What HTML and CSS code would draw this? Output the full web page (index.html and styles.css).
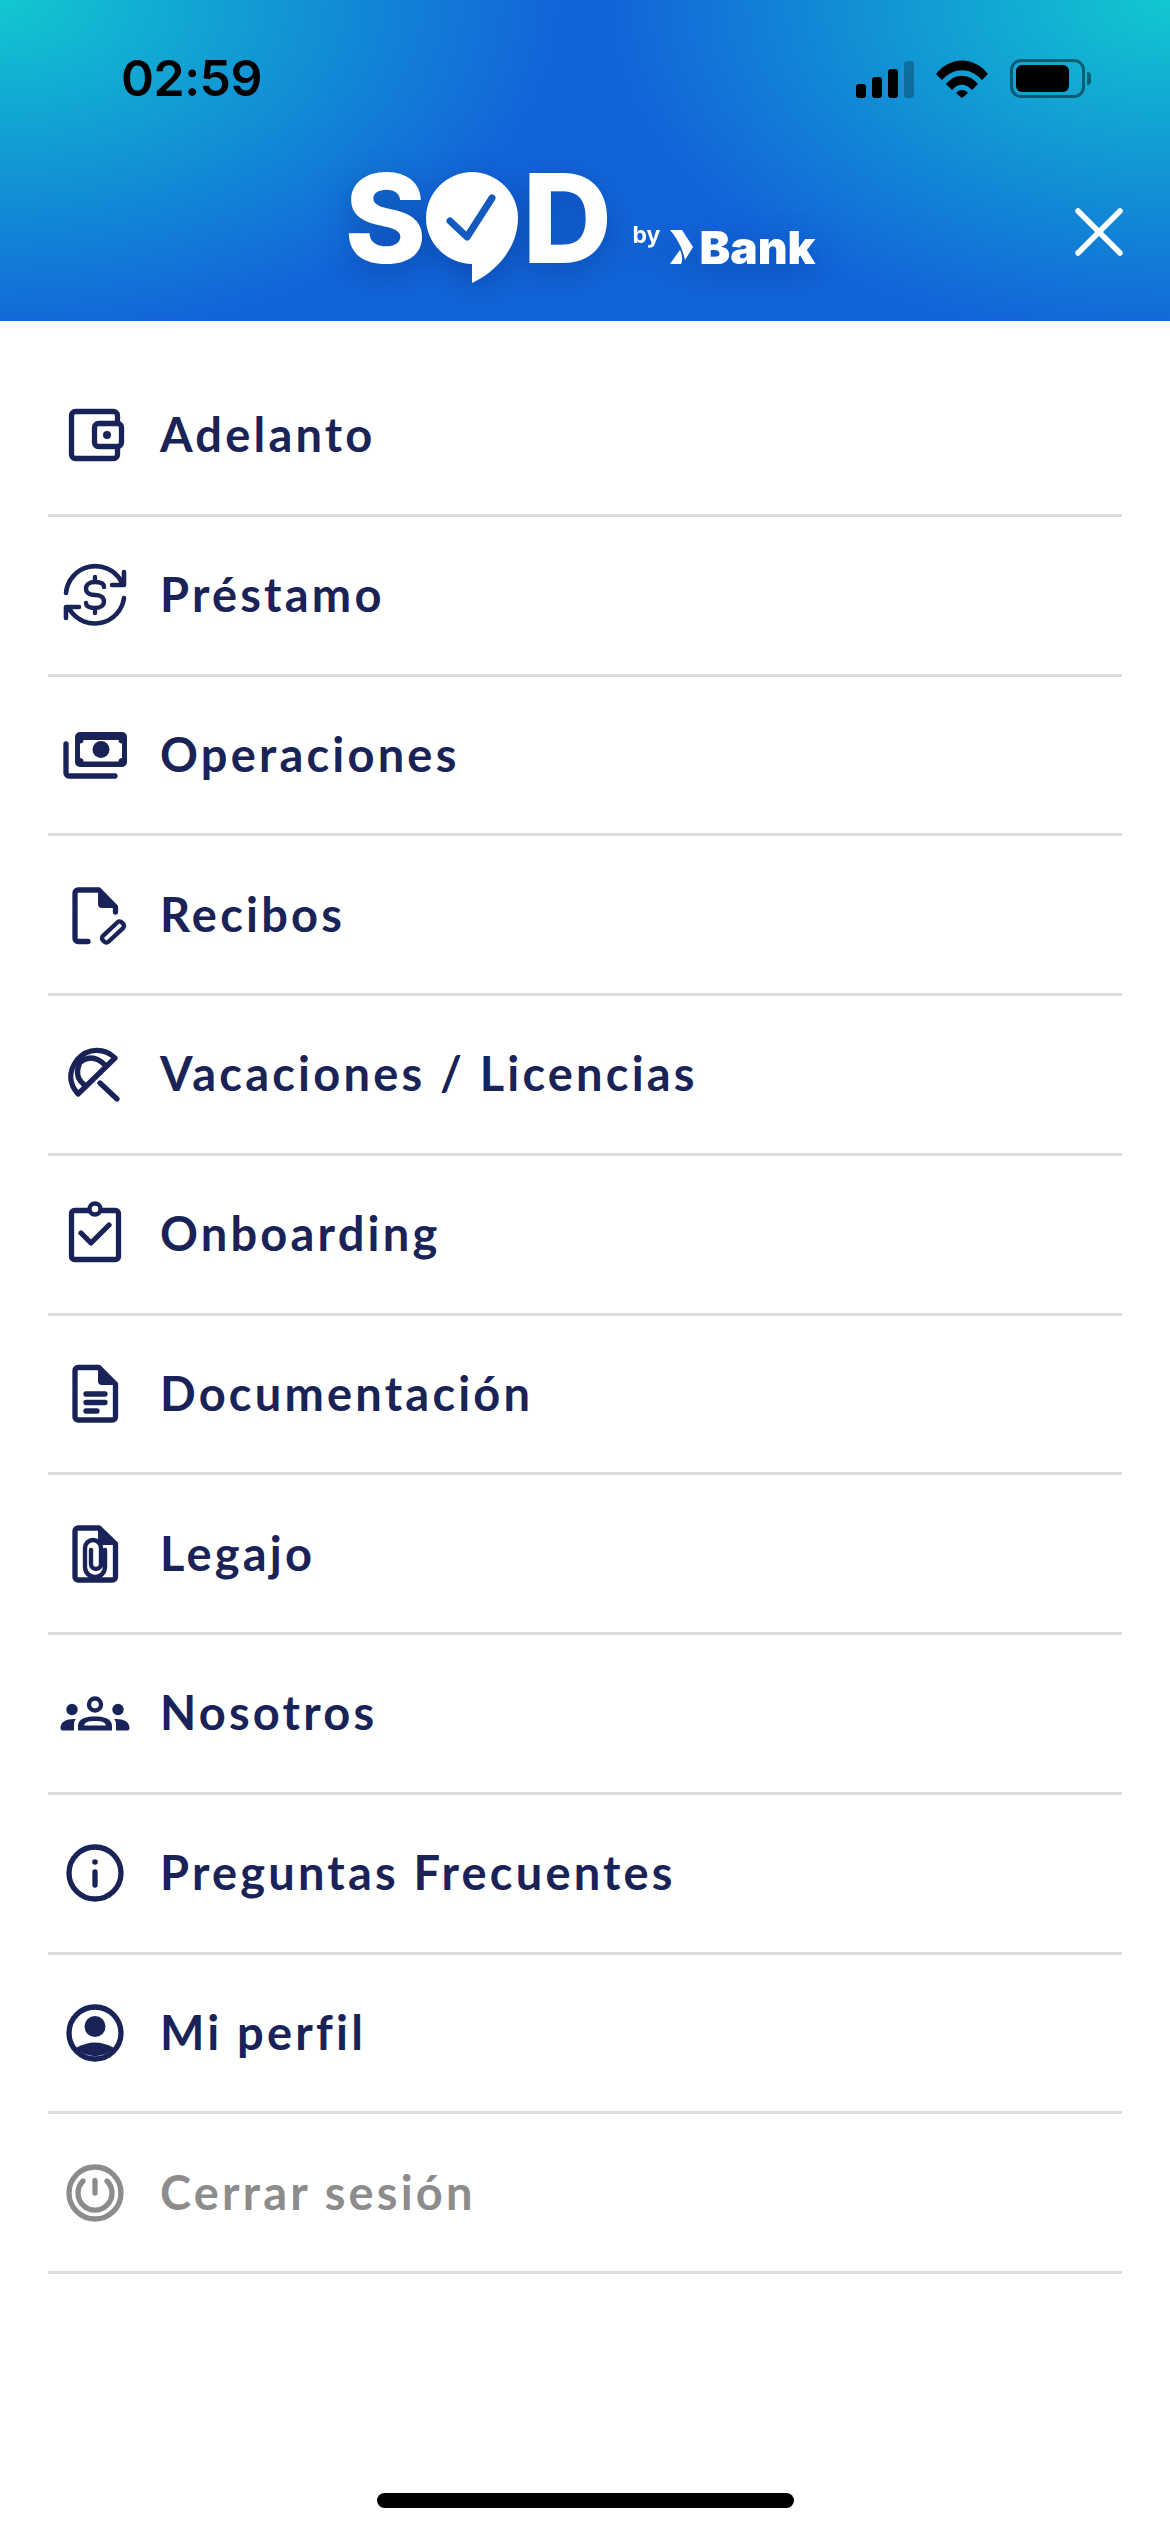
FILE: index.html
```html
<!DOCTYPE html>
<html lang="es">
<head>
<meta charset="utf-8">
<title>Menú</title>
<link rel="stylesheet" href="styles.css">
</head>
<body>
<div class="screen">
  <header class="header">
    <div class="status">
      <span class="time">02:59</span>
      <div class="status-icons">
        <div class="signal"><i class="b1"></i><i class="b2"></i><i class="b3"></i><i class="b4"></i></div>
        <svg class="wifi" width="52" height="38" viewBox="0 0 52 38"><path d="M0 14 C14 -4 38 -4 52 14 L46 20 C34 7 18 7 6 20Z"/><path d="M10 24 C19 13 33 13 42 24 L36 30 C30 23 22 23 16 30Z"/><path d="M20 33 C23 29 29 29 32 33 L26 38Z"/></svg>
        <div class="battery"><div class="battery-body"><div class="battery-fill"></div></div><div class="battery-cap"></div></div>
      </div>
    </div>
    <div class="brand-row">
      <div class="logo">
        <span class="logo-letter logo-s">S</span>
        <svg class="bubble" width="96" height="112" viewBox="0 0 96 112"><path class="bubble-shape" d="M48 0 A46.5 46 0 0 1 94 46 C94 76 72 100 48 111 V92 A46.5 46 0 0 1 2 46 A46.5 46 0 0 1 48 0Z"/><path class="bubble-check" d="M26 49 L43 65 L68 26"/></svg>
        <span class="logo-letter logo-d">D</span>
        <span class="logo-by">by</span>
        <svg class="chevron" width="24" height="36" viewBox="0 0 24 36"><path d="M1 1 H13 L24 18 L16 31 C14 22 11 13 1 1Z"/><path d="M8 25 L11 21 C13 25 14 31 12 35 H1Z"/></svg>
        <span class="logo-bank">Bank</span>
      </div>
      <svg class="close" width="48" height="48" viewBox="0 0 48 48"><path d="M3 3 L45 45 M45 3 L3 45"/></svg>
    </div>
  </header>

  <ul class="menu">
    <li class="item"><svg class="icon" viewBox="0 0 80 80"><rect x="16.5" y="16.5" width="46" height="47" rx="4"/><rect class="knock" x="39.5" y="28.5" width="27" height="23" rx="4"/><circle class="solid" cx="52" cy="40" r="4"/></svg><span>Adelanto</span></li>

    <li class="item"><svg class="icon" viewBox="0 0 80 80"><path class="mid" d="M11 38 A29.5 29.5 0 0 1 66 26 M69 17 V30 H57 M69 43 A29.5 29.5 0 0 1 15 55 M11 63 V52 H24"/><path class="thin" d="M49 32 C49 28 45 27 40 27 C34 27 31 30 31 33.5 C31 38 35 40 40 40 C45 40 49 42 49 46.5 C49 50 46 53 40 53 C35 53 31 52 31 48 M40 22 V27 M40 53 V58"/></svg><span>Préstamo</span></li>

    <li class="item"><svg class="icon" viewBox="0 0 80 80"><rect class="solid" x="20" y="17" width="52" height="35" rx="5"/><rect class="white" x="25" y="25" width="42" height="21.5"/><circle class="solid" cx="25" cy="25" r="3.5"/><circle class="solid" cx="67" cy="25" r="3.5"/><circle class="solid" cx="25" cy="46.5" r="3.5"/><circle class="solid" cx="67" cy="46.5" r="3.5"/><circle class="solid" cx="46" cy="34.5" r="8.5"/><path d="M11 29 V58 a3 3 0 0 0 3 3 H60"/></svg><span>Operaciones</span></li>

    <li class="item"><svg class="icon" viewBox="0 0 80 80"><path d="M33 66.5 H23 a3 3 0 0 1 -3 -3 V18 a3 3 0 0 1 3 -3 H44 L60.5 32 V37"/><path class="solid" d="M43 13 L63 33 H47 a4 4 0 0 1 -4 -4Z"/><rect class="thin" x="-13" y="-4" width="26" height="8" rx="3" transform="translate(58 57) rotate(-43)"/></svg><span>Recibos</span></li>

    <li class="item"><svg class="icon" viewBox="0 0 80 80"><path d="M60 24 L23 60 C14 50 13 38 22 26 C33 13 50 14 60 24Z"/><path d="M22 31 Q36 17 50 31 M24 31 Q19 44 31 52"/><path d="M45 49 L62 65"/></svg><span>Vacaciones / Licencias</span></li>

    <li class="item"><svg class="icon" viewBox="0 0 80 80"><rect x="16.5" y="16.5" width="47" height="49" rx="3"/><circle class="thin knock" cx="40" cy="15" r="5.5"/><path d="M26 39 L36 49 L54 31"/></svg><span>Onboarding</span></li>

    <li class="item"><svg class="icon" viewBox="0 0 80 80"><path d="M23 13.5 H44 L60.5 30 V63 a3 3 0 0 1 -3 3 H23 a3 3 0 0 1 -3 -3 V16.5 a3 3 0 0 1 3 -3Z"/><path class="solid" d="M43 12 L62 31 H47 a4 4 0 0 1 -4 -4Z"/><path d="M31 40 H50 M31 48.5 H50 M31 57 H42"/></svg><span>Documentación</span></li>

    <li class="item"><svg class="icon" viewBox="0 0 80 80"><path d="M23 14 H44 L60.5 30 V63 a3 3 0 0 1 -3 3 H23 a3 3 0 0 1 -3 -3 V17 a3 3 0 0 1 3 -3Z"/><path class="solid" d="M43 12 L62 31 H47 a4 4 0 0 1 -4 -4Z"/><path class="thin" d="M50 36 V53 a10 10 0 0 1 -20 0 V34 a8 8 0 0 1 16 0 V50 a5 5 0 0 1 -10 0 V36"/></svg><span>Legajo</span></li>

    <li class="item"><svg class="icon" viewBox="0 0 80 80"><circle class="thin" cx="40" cy="31.5" r="6"/><circle class="solid" cx="17" cy="36.5" r="5.7"/><circle class="solid" cx="63" cy="36.5" r="5.7"/><path class="solid" d="M23 57.5 V53 C23 45 32 43.5 40 43.5 C48 43.5 57 45 57 53 V57.5Z"/><path class="white" d="M29 52.5 C30 48.5 35 48 40 48 C45 48 50 48.5 51 52.5Z"/><path class="solid" d="M19 46 C11 46 5.5 49 5.5 55 a2.5 2.5 0 0 0 2.5 2.5 H19 V52 C19 50 19 48 21 46Z"/><path class="solid" d="M61 46 C69 46 74.5 49 74.5 55 a2.5 2.5 0 0 1 -2.5 2.5 H61 V52 C61 50 61 48 59 46Z"/></svg><span>Nosotros</span></li>

    <li class="item"><svg class="icon" viewBox="0 0 80 80"><circle cx="40" cy="40" r="26"/><circle class="solid" cx="40" cy="29" r="2.8"/><path d="M40 39 V52"/></svg><span>Preguntas Frecuentes</span></li>

    <li class="item"><svg class="icon" viewBox="0 0 80 80"><circle cx="40" cy="40" r="26"/><circle class="solid" cx="40" cy="33.5" r="10.5"/><path class="solid" d="M21 55 Q40 44 59 55 A26 26 0 0 1 21 55Z"/></svg><span>Mi perfil</span></li>

    <li class="item item-muted"><svg class="icon" viewBox="0 0 80 80"><circle cx="40" cy="40" r="26"/><path d="M28 28 A17 17 0 1 0 52 28 M40 27.5 V40"/></svg><span>Cerrar sesión</span></li>
  </ul>

  <div class="home-indicator"></div>
</div>
</body>
</html>
```
FILE: styles.css
```css
* { box-sizing: border-box; }
html, body { margin: 0; padding: 0; background: #fff; }
.screen {
  width: 1170px;
  height: 2532px;
  display: flex;
  flex-direction: column;
  overflow: hidden;
  background: #fff;
}

/* Header */
.header {
  height: 321px;
  padding-top: 48px;
  background:
    radial-gradient(ellipse 560px 340px at 0 0, #12c8d0, rgba(18, 200, 208, 0)),
    radial-gradient(ellipse 560px 340px at 100% 0, #12c8d0, rgba(18, 200, 208, 0)),
    #1264d9;
  flex: none;
}
.status {
  height: 60px;
  padding: 0 79px 0 121px;
  display: flex;
  align-items: center;
  justify-content: space-between;
}
.time {
  font-family: Inter, "Liberation Sans", sans-serif;
  font-weight: 600;
  font-size: 50px;
  line-height: 60px;
  letter-spacing: -0.5px;
  color: #000;
}
.status-icons { display: flex; align-items: flex-end; gap: 22px; }
.signal { display: flex; align-items: flex-end; gap: 6px; height: 37px; }
.signal i { display: block; width: 10px; background: #000; border-radius: 3px; }
.signal .b1 { height: 14px; }
.signal .b2 { height: 21px; }
.signal .b3 { height: 29px; }
.signal .b4 { height: 37px; background: rgba(0, 0, 0, .25); }
.wifi { fill: #000; }
.battery { display: flex; align-items: center; gap: 2px; }
.battery-body {
  width: 75px;
  height: 39px;
  border: 3px solid rgba(0, 0, 0, .45);
  border-radius: 11px;
  padding: 3px 13px 3px 3px;
}
.battery-fill { width: 100%; height: 100%; background: #000; border-radius: 6px; }
.battery-cap { width: 4px; height: 13px; background: rgba(0, 0, 0, .45); border-radius: 0 4px 4px 0; }

.brand-row {
  margin-top: 64px;
  display: grid;
  grid-template-columns: 1fr auto 1fr;
  align-items: start;
}
.logo {
  grid-column: 2;
  display: flex;
  align-items: flex-start;
  height: 110px;
  margin-right: 5px;
  color: #fff;
  font-family: Inter, "Liberation Sans", sans-serif;
  filter: drop-shadow(0 10px 16px rgba(0, 20, 90, .3));
}
.logo-letter {
  font-weight: 800;
  font-size: 124px;
  line-height: 92px;
}
.logo-s { width: 79px; margin-left: -5px; }
.logo-d { width: 89px; margin-left: 3px; }
.bubble { flex: none; }
.bubble-shape { fill: #fff; }
.bubble-check { fill: none; stroke: #1259c0; stroke-width: 7px; stroke-linecap: round; stroke-linejoin: round; }
.logo-by {
  width: 25px;
  margin: 50px 0 0 21px;
  font-weight: 700;
  font-size: 23px;
  line-height: 26px;
}
.chevron { margin: 57px 0 0 11px; fill: #fff; }
.logo-bank {
  margin: 52px 0 0 7px;
  font-weight: 900;
  font-size: 46px;
  line-height: 46px;
}
.close {
  justify-self: end;
  margin: 36px 47px 0 0;
  fill: none;
  stroke: #fff;
  stroke-width: 5.5px;
  stroke-linecap: round;
}

/* Menu */
.menu {
  list-style: none;
  margin: 0;
  padding: 36px 48px 0;
  flex: 1;
}
.item {
  height: 159.75px;
  padding-left: 7px;
  border-bottom: 3px solid #dcdcdc;
  display: flex;
  align-items: center;
  gap: 25px;
  color: #192357;
  font-family: Lato, sans-serif;
  font-weight: 700;
  font-size: 47px;
  letter-spacing: 3.2px;
}
.item span { margin-bottom: 2px; }
.item-muted { color: #8c8c8c; }
.icon {
  width: 80px;
  height: 80px;
  flex: none;
  fill: none;
  stroke: currentColor;
  stroke-width: 5.3px;
  stroke-linecap: round;
  stroke-linejoin: round;
}
.icon .solid { fill: currentColor; stroke: none; }
.icon .white { fill: #fff; stroke: none; }
.icon .knock { fill: #fff; }
.icon .mid { stroke-width: 4.6px; }
.icon .thin { stroke-width: 4.4px; }

.home-indicator {
  flex: none;
  width: 417px;
  height: 15px;
  margin: 0 auto 24px;
  background: #000;
  border-radius: 8px;
}
```
